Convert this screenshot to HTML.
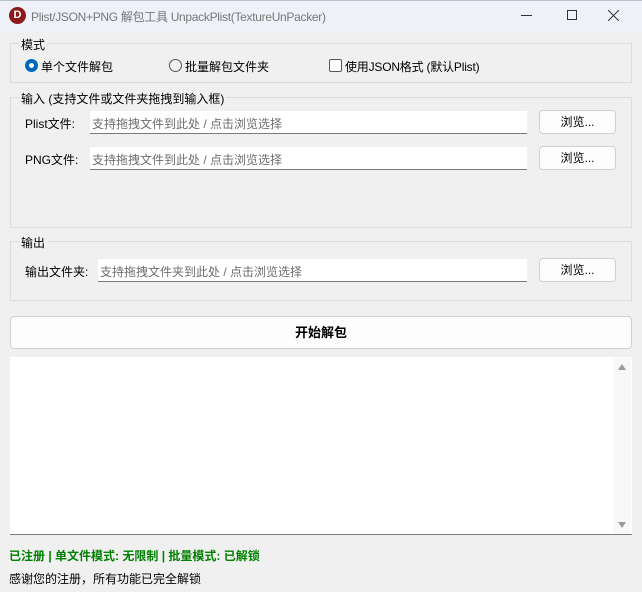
<!DOCTYPE html><html><head><meta charset="utf-8"><style>
*{margin:0;padding:0;box-sizing:border-box}
body{width:642px;height:592px;background:#f0f0f0;font-family:"Liberation Sans","Noto Sans CJK SC",sans-serif;font-size:12px;color:#000;position:relative;overflow:hidden}
.a{position:absolute}
.tb{left:0;top:0;width:642px;height:32px;background:#eef2f8;border-top:1px solid #b8c0cc}
.grp{border:1px solid #dcdcdc}
.lab{background:#f0f0f0;padding:0 2px}
.inp{background:#fff;border-bottom:1px solid #7a7a7a;color:#6d6d6d;padding:4px 2px;font-size:12px}
.btn{background:#fdfdfd;border:1px solid #d0d0d0;border-radius:4px;text-align:center;line-height:22px}
</style></head><body>
<div class="a tb"></div>
<div class="a" style="left:9px;top:7px;width:17px;height:17px;border-radius:50%;background:#8b1a1a;color:#fff;font-weight:bold;font-size:11px;text-align:center;line-height:17px">D</div>
<div class="a" style="left:31px;top:8px;color:#777;font-size:12px;letter-spacing:-0.3px">Plist/JSON+PNG 解包工具 UnpackPlist(TextureUnPacker)</div>
<div class="a" style="left:521px;top:15px;width:11px;border-top:1px solid #333"></div>
<div class="a" style="left:567px;top:10px;width:10px;height:10px;border:1px solid #333"></div>
<svg class="a" style="left:608px;top:10px" width="11" height="11"><path d="M0 0L11 11M11 0L0 11" stroke="#333" stroke-width="1"/></svg>

<div class="a grp" style="left:10px;top:43px;width:622px;height:40px"></div>
<div class="a lab" style="left:19px;top:36px">模式</div>
<div class="a" style="left:25px;top:59px;width:13px;height:13px;border-radius:50%;background:#0067c0"><div style="margin:4px;width:5px;height:5px;border-radius:50%;background:#fff"></div></div>
<div class="a" style="left:41px;top:58px;font-size:12px">单个文件解包</div>
<div class="a" style="left:169px;top:59px;width:13px;height:13px;border-radius:50%;border:1px solid #555"></div>
<div class="a" style="left:185px;top:58px;font-size:12px">批量解包文件夹</div>
<div class="a" style="left:329px;top:59px;width:13px;height:13px;border-radius:2px;border:1px solid #555;background:#fff"></div>
<div class="a" style="left:345px;top:58px;font-size:12px;letter-spacing:-0.2px">使用JSON格式 (默认Plist)</div>

<div class="a grp" style="left:10px;top:97px;width:622px;height:131px"></div>
<div class="a lab" style="left:19px;top:90px">输入 (支持文件或文件夹拖拽到输入框)</div>
<div class="a" style="left:25px;top:115px">Plist文件:</div>
<div class="a inp" style="left:90px;top:111px;width:437px;height:23px">支持拖拽文件到此处 / 点击浏览选择</div>
<div class="a btn" style="left:539px;top:110px;width:77px;height:24px">浏览...</div>
<div class="a" style="left:25px;top:151px">PNG文件:</div>
<div class="a inp" style="left:90px;top:147px;width:437px;height:23px">支持拖拽文件到此处 / 点击浏览选择</div>
<div class="a btn" style="left:539px;top:146px;width:77px;height:24px">浏览...</div>

<div class="a grp" style="left:10px;top:241px;width:622px;height:60px"></div>
<div class="a lab" style="left:19px;top:234px">输出</div>
<div class="a" style="left:25px;top:263px">输出文件夹:</div>
<div class="a inp" style="left:98px;top:259px;width:429px;height:23px">支持拖拽文件夹到此处 / 点击浏览选择</div>
<div class="a btn" style="left:539px;top:258px;width:77px;height:24px">浏览...</div>

<div class="a btn" style="left:10px;top:316px;width:622px;height:33px;line-height:31px;font-weight:bold;font-size:13px">开始解包</div>

<div class="a" style="left:10px;top:357px;width:622px;height:178px;background:#fff;border-bottom:1px solid #7a7a7a"></div>
<div class="a" style="left:614px;top:358px;width:17px;height:176px;background:#f8f8f8"></div>
<div class="a" style="left:618px;top:364px;border:4px solid transparent;border-bottom:6px solid #999;border-top:0"></div>
<div class="a" style="left:618px;top:522px;border:4px solid transparent;border-top:6px solid #999;border-bottom:0"></div>

<div class="a" style="left:9px;top:547px;color:#008000;font-weight:bold">已注册 | 单文件模式: 无限制 | 批量模式: 已解锁</div>
<div class="a" style="left:9px;top:570px">感谢您的注册，所有功能已完全解锁</div>
</body></html>
